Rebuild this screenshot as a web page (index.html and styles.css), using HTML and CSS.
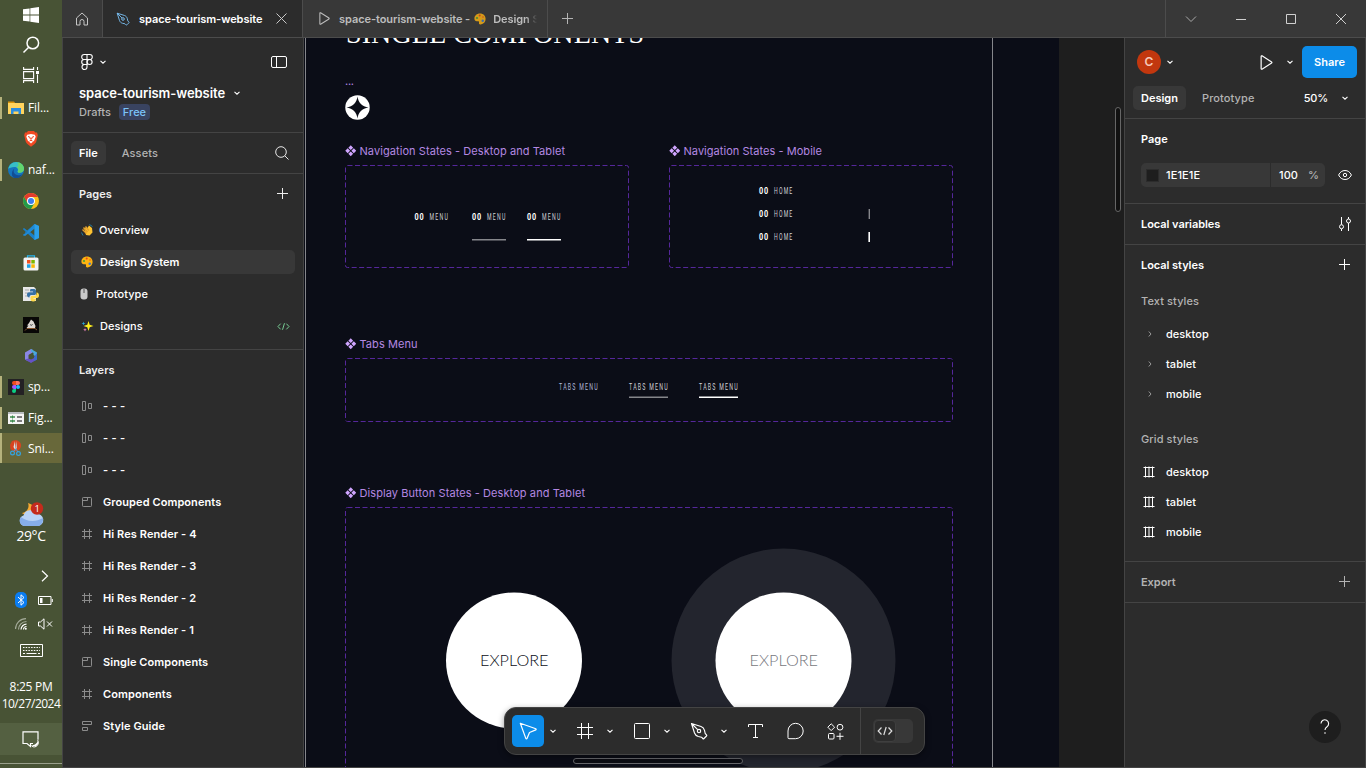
FILE: index.html
```html
<!DOCTYPE html>
<html lang="en">
<head>
<meta charset="utf-8">
<title>space-tourism-website</title>
<link rel="stylesheet" href="styles.css">
</head>
<body>
<svg class="sprite" aria-hidden="true">
  <symbol id="chev" viewBox="0 0 8 8"><path d="M1.5 2.8 4 5.2 6.5 2.8" fill="none" stroke="currentColor" stroke-width="1.1"/></symbol>
  <symbol id="caret" viewBox="0 0 8 8"><path d="M2.8 1.5 5 4 2.8 6.5" fill="none" stroke="currentColor"/></symbol>
  <symbol id="plus" viewBox="0 0 12 12"><path d="M6 .5v11M.5 6h11" fill="none" stroke="currentColor" transform="translate(-.5 -.5)"/></symbol>
  <symbol id="hash" viewBox="0 0 16 16"><path d="M4.5 0v16M11.5 0v16M0 4.5h16M0 11.5h16" fill="none" stroke="currentColor"/></symbol>
  <symbol id="auto-h" viewBox="0 0 12 12"><path d="M1.5 1.5h3v9h-3zM7.500 3.5h3v5h-3z" fill="none" stroke="currentColor"/></symbol>
  <symbol id="auto-v" viewBox="0 0 12 12"><path d="M1.500 1.500h9v3h-9zM1.500 7.500h5v3h-5z" fill="none" stroke="currentColor"/></symbol>
  <symbol id="section" viewBox="0 0 12 12"><rect x="1.500" y="1.500" width="9" height="9" rx=".8" fill="none" stroke="currentColor"/><path d="M2 4.500h4.500V2" fill="none" stroke="currentColor"/></symbol>
  <symbol id="frame" viewBox="0 0 12 12"><path d="M3.500 1v10M8.500 1v10M1 3.500h10M1 8.500h10" fill="none" stroke="currentColor"/></symbol>
  <symbol id="grid" viewBox="0 0 12 12"><path d="M2.500.500v11M6 .500v11M9.500.500v11M.500 1.500h11M.500 10.500h11" fill="none" stroke="currentColor"/></symbol>
  <symbol id="code" viewBox="0 0 16 10"><path d="M4.500 1.500 1.200 5l3.300 3.500M11.500 1.500 14.800 5l-3.300 3.500M9.200 1 6.800 9" fill="none" stroke="currentColor" stroke-width="1.200"/></symbol>
  <symbol id="play" viewBox="0 0 14 14"><path d="M2 1.300v11.400c0 .5.400.700.800.500L11.800 7.500a.6.600 0 0 0 0-1L2.800.800C2.400.600 2 .800 2 1.300z" fill="none" stroke="currentColor" stroke-width="1.100"/></symbol>
  <symbol id="pen" viewBox="0 0 18 18"><path d="M1.500 1.500 11 4.500c1.700.600 3 2 3.500 3.800l.700 3.200 1.300 1.300c.4.400.4.800 0 1.200l-2.500 2.500c-.4.400-.8.400-1.200 0l-1.300-1.300-3.200-.700C6.500 14 5.100 12.700 4.500 11zM1.500 1.500l6.200 6.200" fill="none" stroke="currentColor" stroke-width="1.150" stroke-linejoin="round"/><circle cx="9" cy="9" r="1.700" fill="none" stroke="currentColor" stroke-width="1.150"/></symbol>
  <symbol id="palette" viewBox="0 0 12 12"><path d="M6 .6C2.800.600.400 2.800.400 5.600.400 8 2 8.600 3.500 8.200c1.300-.3 1.800.4 1.500 1.500-.3 1.200.5 1.900 1.700 1.700 2.900-.4 4.900-2.700 4.900-5.500C11.600 2.800 9.200.600 6 .600z" fill="#fdb311"/><circle cx="3" cy="5" r="1.100" fill="#4b9e35"/><circle cx="5.700" cy="2.500" r="1" fill="#e8471c"/><circle cx="9" cy="4" r="1" fill="#f2791c"/><circle cx="8.700" cy="7.800" r="1.200" fill="#3678d3"/></symbol>
  <symbol id="comp" viewBox="0 0 12 12"><path d="M6 .3 8.500 2.800 6 5.300 3.500 2.800zM6 6.700l2.500 2.500L6 11.700 3.500 9.200zM2.800 3.500 5.300 6 2.800 8.500.300 6zM9.200 3.500 11.700 6 9.200 8.500 6.700 6z" fill="#d0a5ff"/></symbol>
</svg>

<div class="desktop">
<nav class="taskbar">
  <div class="tb-sys"><svg width="16" height="16" viewBox="0 0 16 16"><path d="M0 2.300 6.600 1.400v6.200H0zM7.300 1.300 16 0v7.600H7.300zM0 8.400h6.600v6.200L0 13.700zM7.300 8.400H16V16l-8.700-1.300z" fill="#fff"/></svg></div>
  <div class="tb-sys"><svg width="18" height="18" viewBox="0 0 18 18" fill="none" stroke="#fff" stroke-width="1.500"><circle cx="10.800" cy="7" r="5.800"/><path d="M6.700 11.300 1.500 16.500"/></svg></div>
  <div class="tb-sys"><svg width="17" height="16" viewBox="0 0 17 16" fill="none" stroke="#fff" stroke-width="1.100"><path d="M.600 0v2.400h10V0M.600 16v-2.400h10V16M.600 4.600h10v7H.600zM14.500 0v3M14.500 7.500V16"/><path d="M13 4h3v3h-3z" fill="#fff" stroke="none"/></svg></div>
  <div class="tb-apps">
    <div class="tb-app open"><svg width="16" height="16" viewBox="0 0 16 16"><path d="M0 1.500h6l1.500 2H0z" fill="#d9920b"/><path d="M0 3h16v11H0z" fill="#ffd45e"/><path d="M3 8h10v6h-2.500v-2.500h-5V14H3z" fill="#2a8de0"/></svg><span>Fil...</span></div>
    <div class="tb-app"><svg width="14" height="16" viewBox="0 0 14 16"><path d="M4 0h6l1.300 1.400 1.700.2.800 2.600-1.500 6.300c-.5 2-2.300 3.200-5.300 5.200-3-2-4.800-3.200-5.300-5.200L.200 4.200 1 1.600l1.700-.2z" fill="#f04923"/><path d="M3.200 3.800 7 3l3.800.8.900 2-1.500 3.700L7 12.500 3.800 9.500 2.300 5.800z" fill="#fff"/><path d="M4 5.500l2 .8L6.300 8 7 8.500 7.700 8 8 6.300l2-.8M5.500 10 7 9.300l1.500.7" fill="none" stroke="#f04923"/></svg></div>
    <div class="tb-app open"><svg width="16" height="16" viewBox="0 0 16 16"><circle cx="8" cy="8" r="8" fill="#1574bd"/><path d="M.3 7C1 3 4 0 8 0c4.500 0 8 3 8 6.800 0 2.500-2 4-4.200 4-1.800 0-2.600-.8-2-1.800C10.500 7.500 9.500 5 6.500 5 3.500 5 1 6 .3 7z" fill="#38bfc6"/><path d="M9 .2c4 0 7 3 7 6.600 0 2.500-2 4-4.200 4-1.800 0-2.600-.8-2-1.800 1-1.500.2-3-1-3.700C11 4 11 2 9 .200z" fill="#63d46d"/><path d="M6.500 6.500C4.500 9 6 13 10 13.300c2 .1 3.500-.6 4.500-1.300-2 4-6 4.800-9 3.400C3 14 3.500 8 6.500 6.500z" fill="#124e96"/></svg><span>naf...</span></div>
    <div class="tb-app"><svg width="16" height="16" viewBox="0 0 16 16"><circle cx="8" cy="8" r="8" fill="#fbc116"/><path d="M1.100 4A8 8 0 0 1 14.900 4H8L4.500 10z" fill="#e33b2e"/><path d="M1.100 4A8 8 0 0 0 8 16l3.500-6L4.500 10z" fill="#229a4b"/><circle cx="8" cy="8" r="4" fill="#fff"/><circle cx="8" cy="8" r="3" fill="#3b7ded"/></svg></div>
    <div class="tb-app"><svg width="16" height="16" viewBox="0 0 16 16"><path d="M11.500 0 16 2v12l-4.500 2-9-8.800L1 11.800 0 11l3.500-3L0 5l1-.8 3.200 2.300z" fill="#1b80c8"/><path d="M1 4.200 12 12.500V16L0 5z" fill="#1b80c8"/><path d="M11.500 4.500v7L7 8z" fill="#485335"/><path d="M4 8l7.500-8v4.500L2 12l-2-1z" fill="#1f8ad6"/><path d="M11.500 0 16 2v12l-4.500 2z" fill="#2ba0ea"/></svg></div>
    <div class="tb-app"><svg width="16" height="16" viewBox="0 0 16 16"><path d="M4.500 3.500V.8h7v2.700" fill="none" stroke="#27b5ee" stroke-width="1.200"/><rect x=".5" y="2.500" width="15" height="13" rx="1.500" fill="#f4f4f4"/><path d="M4 5h3.500v3.500H4z" fill="#ef5022"/><path d="M8.300 5h3.500v3.500H8.300z" fill="#7db700"/><path d="M4 9.300h3.500v3.500H4z" fill="#1ba0e8"/><path d="M8.300 9.300h3.500v3.500H8.300z" fill="#fbb805"/></svg></div>
    <div class="tb-app"><svg width="16" height="16" viewBox="0 0 16 16"><path d="M0 1h11l2 2v12H0z" fill="#e8e8e8"/><path d="M2 4h4M2 7h4M2 10h4" stroke="#aaa"/><path d="M8 3h3c1.500 0 2 .7 2 2v2.500c0 1-1 1.500-2 1.500H8.500C7 9 6.500 10 6.500 11.500 4.500 11.500 4 10 4 8.800 4 7 5 6.300 6.500 6.300H10V5.500H7C7 4 7 3 8 3z" fill="#3671a5"/><path d="M13.500 6.500C15.500 6.500 16 8 16 9.500s-.7 2.500-2 2.500h-3.500v.7H13c0 1.700-.6 2.800-2.700 2.800S7.500 14.500 7.500 13v-1.500c0-1 .7-1.700 2-1.700h2.200c1.300 0 1.800-1 1.800-2z" fill="#ffd94c"/></svg></div>
    <div class="tb-app"><svg width="16" height="16" viewBox="0 0 16 16"><path d="M0 0h16v16H0z" fill="#080706"/><path d="M8 2.500 10.500 4.500l2 4.500-.5 2H3.500l2-2.500L4 8.500 6 6z" fill="#ddd8d2"/><path d="M2 13.500 4 11.500h8l2 1.500" fill="none" stroke="#86552f"/><path d="M7 7.500l1.500 1L9.500 7" stroke="#555" fill="none"/></svg></div>
    <div class="tb-app"><svg width="14" height="14" viewBox="0 0 14 14"><path d="M7 0 1 3.500v7L4.500 12.500V6L8.500 3.500 9 1z" fill="#8a86e4"/><path d="M7 0l6 3.500v5L9.500 6V4L7 2.500z" fill="#4aa8dd"/><path d="M1 10.500 7 14l6-3.500V7.500L7 10.500 4.500 9.500z" fill="#6652c4"/><path d="M13 4v6.500l-3 1.500V8z" fill="#3c6bd0"/><path d="M7 5 9 6v2.500L7 9.500 5 8.500V6z" fill="#485335"/></svg></div>
    <div class="tb-app open"><svg width="16" height="16" viewBox="0 0 16 16"><path d="M0 0h16v16H0z" fill="#232124"/><path d="M6 2h2v4H6a2 2 0 0 1 0-4z" fill="#f24e1e"/><path d="M8 2h2a2 2 0 0 1 0 4H8z" fill="#ff7262"/><path d="M6 6h2v4H6a2 2 0 0 1 0-4z" fill="#a259ff"/><circle cx="10" cy="8" r="2" fill="#1abcfe"/><path d="M6 10h2v2a2 2 0 1 1-2-2z" fill="#0acf83"/></svg><span>sp...</span></div>
    <div class="tb-app open"><svg width="16" height="16" viewBox="0 0 16 16"><path d="M0 2h16v12H0z" fill="#f5f5f5"/><path d="M0 2h16v2H0z" fill="#b9bdc0"/><path d="M2 7h5M2 11h5" stroke="#3b8a4b" stroke-width="1.300"/><path d="M9 7h5M9 11h5" stroke="#555" stroke-width="1.300"/><path d="M4.500 5.500v3M4.500 9.500v3" stroke="#3b8a4b" /></svg><span>Fig...</span></div>
    <div class="tb-app active"><svg width="16" height="16" viewBox="0 0 16 16"><path d="M4 1c4-2 9 0 9 4.500 0 4-4 6.500-7 6L2.500 9 2 5z" fill="#d84420"/><path d="M7 1l.5 9.500L5.500 7z" fill="#dfe3e6"/><path d="M8.500 1 7 10 9 8z" fill="#bcc2c6"/><circle cx="4.500" cy="13" r="1.900" fill="none" stroke="#35a3e0" stroke-width="1.200"/><circle cx="10.500" cy="13.500" r="1.900" fill="none" stroke="#35a3e0" stroke-width="1.200"/><path d="M5.500 11.500 8 9l1.800 3" fill="none" stroke="#35a3e0"/></svg><span>Sni...</span></div>
  </div>
  <div class="weather"><svg width="26" height="25" viewBox="0 0 26 25"><path d="M10 1C12 6 8 11 4 11c3 3 10 2 12-3 1-3-2-6-6-7z" fill="#f7a930"/><path d="M6 24a5.500 5.500 0 0 1-.5-10.500 7 7 0 0 1 13-1.500A6 6 0 0 1 20 24z" fill="#b9d3f7"/><path d="M6 24a5.500 5.500 0 0 1-3-9c4 4 14 6 22 1 .6 4-2 8-5 8z" fill="#86aeea"/><circle cx="19" cy="6.500" r="6.200" fill="#c42b1c"/><text x="19" y="10" text-anchor="middle" font-family="Open Sans" font-size="9.500" fill="#fff">1</text></svg><span>29°C</span></div>
  <div class="tray">
    <svg class="more" width="8" height="12" viewBox="0 0 8 12"><path d="M1 .800 6.500 6 1 11.200" fill="none" stroke="#fff" stroke-width="1.200"/></svg>
    <div class="tray-row"><svg width="12" height="16" viewBox="0 0 12 16"><rect width="12" height="16" rx="5" fill="#0a7df2"/><path d="M3 5l6 5.500-3 2.700V2.800l3 2.700L3 11" fill="none" stroke="#fff"/></svg><svg width="15" height="9" viewBox="0 0 15 9"><path d="M.500.500h12.500v8H.500zM14.300 3v3" fill="none" stroke="#fff"/><path d="M2 2h2.500v5H2z" fill="#fff"/></svg></div>
    <div class="tray-row"><svg width="12" height="12" viewBox="0 0 12 12" fill="none" stroke-width="1.200"><path d="M.500 11A10.500 10.500 0 0 1 11 .600M3.500 11.500A8 8 0 0 1 11.500 3.500" stroke="#a3aa98"/><path d="M6 11.500A5.500 5.500 0 0 1 11.500 6.200M8.500 11.500a3 3 0 0 1 3-3" stroke="#fff"/><circle cx="10.800" cy="10.800" r="1" fill="#fff"/></svg><svg width="15" height="12" viewBox="0 0 15 12" fill="none" stroke="#fff"><path d="M.500 4h2L6 .800v10.400L2.500 8h-2zM9 3.500l5 5M14 3.500l-5 5"/></svg></div>
    <svg width="23" height="13" viewBox="0 0 23 13" fill="none" stroke="#fff"><path d="M.500.500h22v12H.500z"/><path d="M3 3.500h17M3 6.500h17" stroke-dasharray="1.500 1.200"/><path d="M3 9.500h2M6.500 9.500h10M18 9.500h2"/></svg>
  </div>
  <div class="clock"><span>8:25 PM</span><span class="date">10/27/2024</span></div>
  <div class="notif"><svg width="18" height="17" viewBox="0 0 18 17"><path d="M11 12.500H8.500v3L5 12.500H1V.800h15v8" fill="none" stroke="#fff" stroke-width="1.200"/><path d="M16 9.500a4 4 0 0 1-5 5.500c-1-.4-1.500-.9-1.500-.9s4.500.8 6.500-4.600z" fill="#fff"/><path d="M15.500 9c1.500 2 1 5-1.500 6.500-2 .9-4 .3-4.500-1" fill="none" stroke="#fff"/></svg></div>
  <div class="peek"></div>
</nav>

<div class="app">
  <header class="titlebar">
    <div class="home"><svg width="14" height="14" viewBox="0 0 14 14"><path d="M1.500 6 7 1l5.500 5v7H9V9.500a2 2 0 0 0-4 0V13H1.500z" fill="none" stroke="#c6c6c6" stroke-linejoin="round"/></svg></div>
    <div class="tab current"><svg class="blue" width="14" height="14"><use href="#pen"/></svg><span class="tab-name">space-tourism-website</span><svg class="x" width="11" height="11" viewBox="0 0 11 11"><path d="M.500.500l10 10M10.500.500l-10 10" stroke="currentColor"/></svg></div>
    <div class="tab other"><svg width="13" height="13"><use href="#play"/></svg><span class="tab-name">space-tourism-website -</span><svg class="emo" width="12" height="12"><use href="#palette"/></svg><span class="tab-name fade">Design S</span></div>
    <div class="newtab"><svg width="11" height="11" viewBox="0 0 11 11"><path d="M5.500 0v11M0 5.500h11" stroke="#b4b4b4"/></svg></div>
    <div class="win">
      <svg width="12" height="12" viewBox="0 0 12 12"><path d="M1 3.500 6 8.500 11 3.500" fill="none" stroke="#aaa"/></svg>
      <svg width="12" height="12" viewBox="0 0 12 12"><path d="M1 6.500h10" stroke="#d0d0d0"/></svg>
      <svg width="12" height="12" viewBox="0 0 12 12"><path d="M1.500 1.500h9v9h-9z" fill="none" stroke="#d0d0d0"/></svg>
      <svg width="12" height="12" viewBox="0 0 12 12"><path d="M1 1l10 10M11 1 1 11" stroke="#d0d0d0"/></svg>
    </div>
  </header>

  <div class="main">
    <aside class="left">
      <div class="file-head">
        <div class="logo-row"><svg width="14" height="18" viewBox="0 0 14 18" fill="none" stroke="#fff" stroke-width="1.100"><path d="M7 1.500H4.200a2.500 2.500 0 0 0 0 5H7zM7 1.500h2.800a2.500 2.500 0 0 1 0 5H7M7 6.500H4.200a2.500 2.500 0 0 0 0 5H7z"/><circle cx="9.600" cy="9" r="2.500"/><path d="M7 11.500H4.200A2.500 2.500 0 1 0 7 14z"/></svg><svg width="8" height="8"><use href="#chev"/></svg><svg class="push" width="16" height="12" viewBox="0 0 16 12" fill="none" stroke="#fff"><rect x=".500" y=".500" width="15" height="11" rx="1.500"/><path d="M5.500.500v11"/></svg></div>
        <div class="name-row"><span>space-tourism-website</span><svg width="8" height="8"><use href="#chev"/></svg></div>
        <div class="drafts"><span>Drafts</span><b>Free</b></div>
      </div>
      <div class="tabs"><span class="pill">File</span><span class="muted">Assets</span><svg class="push" width="14" height="14" viewBox="0 0 14 14" fill="none" stroke="#e8e8e8"><circle cx="6" cy="6" r="5.300"/><path d="M9.800 9.800 13.500 13.500"/></svg></div>
      <div class="pages">
        <div class="sec"><span>Pages</span><svg width="12" height="12"><use href="#plus"/></svg></div>
        <div class="page"><svg width="12" height="12" viewBox="0 0 12 12"><path d="M3.500 5.500 5 3l1.500 1L8 1.500l3 2.500.5 4.500L8.500 11.500 5 11z" fill="#ffc331"/><path d="M1.500 5.500l4 4M2.500 3.500l4 4.500M4.500 2.500l3.500 4" stroke="#e5a02a" stroke-width="1.400"/><path d="M.500 8.500 2 11.500M8.500.500l3 2" stroke="#23789c"/></svg><span>Overview</span></div>
        <div class="page sel"><svg width="12" height="12"><use href="#palette"/></svg><span>Design System</span></div>
        <div class="page mouse"><svg width="8" height="12" viewBox="0 0 8 12"><rect x=".500" y=".500" width="7" height="11" rx="3" fill="#c9c9c9"/><path d="M4 1v4" stroke="#555"/></svg><span>Prototype</span></div>
        <div class="page"><svg width="13" height="12" viewBox="0 0 13 12"><path d="M7.500 1 8.700 4.800 12.500 6 8.700 7.200 7.500 11 6.300 7.200 2.500 6l3.800-1.200z" fill="#fff01e"/><path d="M2.500 1.500 3 3l1.500.5L3 4l-.5 1.500L2 4 .500 3.500 2 3z" fill="#2aa9d8"/><path d="M4 8l.5 1.300 1.300.5-1.300.5L4 11.600l-.5-1.300-1.300-.5 1.300-.5z" fill="#ef86c4"/></svg><span>Designs</span><svg class="dev" width="13" height="9"><use href="#code"/></svg></div>
      </div>
      <div class="layers">
        <div class="sec"><span>Layers</span></div>
        <div class="layer"><svg width="12" height="12"><use href="#auto-h"/></svg><span class="dash">- - -</span></div>
        <div class="layer"><svg width="12" height="12"><use href="#auto-h"/></svg><span class="dash">- - -</span></div>
        <div class="layer"><svg width="12" height="12"><use href="#auto-h"/></svg><span class="dash">- - -</span></div>
        <div class="layer"><svg width="12" height="12"><use href="#section"/></svg><span>Grouped Components</span></div>
        <div class="layer"><svg width="12" height="12"><use href="#frame"/></svg><span>Hi Res Render - 4</span></div>
        <div class="layer"><svg width="12" height="12"><use href="#frame"/></svg><span>Hi Res Render - 3</span></div>
        <div class="layer"><svg width="12" height="12"><use href="#frame"/></svg><span>Hi Res Render - 2</span></div>
        <div class="layer"><svg width="12" height="12"><use href="#frame"/></svg><span>Hi Res Render - 1</span></div>
        <div class="layer"><svg width="12" height="12"><use href="#section"/></svg><span>Single Components</span></div>
        <div class="layer"><svg width="12" height="12"><use href="#frame"/></svg><span>Components</span></div>
        <div class="layer"><svg width="12" height="12"><use href="#auto-v"/></svg><span>Style Guide</span></div>
      </div>
    </aside>

    <section class="canvas">
      <svg class="art" width="820" height="730" viewBox="304 38 820 730">
        <rect x="304" y="38" width="755" height="730" fill="#0b0d17"/>
        <path d="M305.500 38v730M992.500 38v730" stroke="#85868b"/>
        <text class="serif" x="346" y="43" font-size="28" textLength="298" fill="#fff">SINGLE COMPONENTS</text>
        <text class="label" x="345" y="85" font-size="11" textLength="9">...</text>
        <circle cx="357.500" cy="107.500" r="12.200" fill="#fff"/>
        <path d="M357.500 96.500c.9 6.500 4.500 10.100 11 11-6.500.9-10.100 4.500-11 11-.9-6.500-4.500-10.100-11-11 6.500-.9 10.100-4.500 11-11z" fill="#0b0d17"/>

        <use href="#comp" x="345" y="145" width="11.500" height="11.500"/>
        <text class="label" x="359.500" y="155" textLength="205.500">Navigation States - Desktop and Tablet</text>
        <use href="#comp" x="669" y="145" width="11.500" height="11.500"/>
        <text class="label" x="683.500" y="155" textLength="138.500">Navigation States - Mobile</text>
        <use href="#comp" x="345" y="338" width="11.500" height="11.500"/>
        <text class="label" x="359.500" y="348" textLength="58">Tabs Menu</text>
        <use href="#comp" x="345" y="487" width="11.500" height="11.500"/>
        <text class="label" x="359.500" y="497" textLength="225.500">Display Button States - Desktop and Tablet</text>

        <g fill="none" stroke="#55279a" stroke-dasharray="5 2.500">
          <rect x="345.500" y="165.500" width="283" height="102" rx="2"/>
          <rect x="669.500" y="165.500" width="283" height="102" rx="2"/>
          <rect x="345.500" y="358.500" width="607" height="63" rx="2"/>
          <rect x="345.500" y="507.500" width="607" height="300" rx="2"/>
        </g>

        <g class="cond">
          <text class="num" x="414.500" y="220" textLength="10" lengthAdjust="spacingAndGlyphs">00</text><text x="429.500" y="220" textLength="19.500" lengthAdjust="spacingAndGlyphs">MENU</text>
          <text class="num" x="472" y="220" textLength="10" lengthAdjust="spacingAndGlyphs">00</text><text x="487" y="220" textLength="19.500" lengthAdjust="spacingAndGlyphs">MENU</text>
          <text class="num" x="527" y="220" textLength="10" lengthAdjust="spacingAndGlyphs">00</text><text x="542" y="220" textLength="19.500" lengthAdjust="spacingAndGlyphs">MENU</text>
          <text class="num" x="759" y="194" textLength="10" lengthAdjust="spacingAndGlyphs">00</text><text x="774" y="194" textLength="19.500" lengthAdjust="spacingAndGlyphs">HOME</text>
          <text class="num" x="759" y="217" textLength="10" lengthAdjust="spacingAndGlyphs">00</text><text x="774" y="217" textLength="19.500" lengthAdjust="spacingAndGlyphs">HOME</text>
          <text class="num" x="759" y="240" textLength="10" lengthAdjust="spacingAndGlyphs">00</text><text x="774" y="240" textLength="19.500" lengthAdjust="spacingAndGlyphs">HOME</text>
          <text class="tint" x="559" y="390" textLength="40" lengthAdjust="spacingAndGlyphs">TABS MENU</text>
          <text x="629" y="390" textLength="40" lengthAdjust="spacingAndGlyphs">TABS MENU</text>
          <text x="699" y="390" textLength="40" lengthAdjust="spacingAndGlyphs">TABS MENU</text>
        </g>
        <path d="M472 239.700h34M629 397.200h39" stroke="#85868b" stroke-width="1.500"/>
        <path d="M527 239.700h34M699 397.200h39" stroke="#fff" stroke-width="1.500"/>
        <path d="M869.300 209v10" stroke="#85868b" stroke-width="1.400"/>
        <path d="M869.200 232v10" stroke="#fff" stroke-width="1.600"/>

        <circle cx="783.500" cy="660.500" r="112" fill="#23252e"/>
        <circle cx="514" cy="660.500" r="68" fill="#fff"/>
        <circle cx="783.500" cy="660.500" r="68" fill="#fff"/>
        <text class="display" x="480" y="665.500" textLength="68.500" lengthAdjust="spacingAndGlyphs" fill="#0b0d17">EXPLORE</text>
        <text class="display" x="749.500" y="665.500" textLength="68.500" lengthAdjust="spacingAndGlyphs" fill="#777880">EXPLORE</text>
      </svg>
      <div class="vscroll"></div>
      <div class="hscroll"></div>
      <div class="toolbar">
        <div class="tool on"><svg width="20" height="20" viewBox="0 0 20 20"><path d="M2.300 2.300 17.800 7.800c.5.200.5.900 0 1.100L11.500 11.500 9 17.600c-.2.500-.9.500-1.100 0z" fill="none" stroke="#fff" stroke-width="1.200" stroke-linejoin="round"/></svg></div><svg class="c" width="8" height="8"><use href="#chev"/></svg>
        <div class="tool"><svg width="16" height="16"><use href="#hash"/></svg></div><svg class="c" width="8" height="8"><use href="#chev"/></svg>
        <div class="tool"><svg width="16" height="16" viewBox="0 0 16 16"><rect x=".500" y=".500" width="15" height="15" rx="1" fill="none" stroke="#fff"/></svg></div><svg class="c" width="8" height="8"><use href="#chev"/></svg>
        <div class="tool"><svg width="18" height="18"><use href="#pen"/></svg></div><svg class="c" width="8" height="8"><use href="#chev"/></svg>
        <div class="tool wide"><svg width="16" height="16" viewBox="0 0 16 16"><path d="M.500 4V1.500h14V4M7.500 1.500v13M5 14.500h5" fill="none" stroke="#fff"/></svg></div>
        <div class="tool wide"><svg width="18" height="18" viewBox="0 0 18 18"><path d="M8.500 1.300a7.700 7.700 0 1 1 0 15.400H2a1 1 0 0 1-1-1V9A7.600 7.600 0 0 1 8.500 1.300z" fill="none" stroke="#fff"/></svg></div>
        <div class="tool wide"><svg width="18" height="17" viewBox="0 0 18 17" fill="none" stroke="#fff"><path d="M4.200.800 7.600 4.200 4.200 7.600.800 4.200z" stroke-linejoin="round"/><circle cx="13" cy="4.200" r="2.900"/><rect x="1.500" y="10.500" width="5.500" height="5.500" rx="1"/><path d="M13 9.800v7M9.500 13.300h7"/></svg></div>
        <div class="devtog"><div class="switch"><div class="knob"><svg width="16" height="10"><use href="#code"/></svg></div></div></div>
      </div>
    </section>

    <aside class="right">
      <div class="r-head">
        <div class="r-user"><span class="avatar">C</span><svg width="8" height="8"><use href="#chev"/></svg><svg class="r-play" width="15" height="15"><use href="#play"/></svg><svg class="r-c" width="8" height="8"><use href="#chev"/></svg><span class="share">Share</span></div>
        <div class="r-tabs"><span class="pill">Design</span><span class="muted">Prototype</span><span class="zoom">50%</span><svg width="8" height="8"><use href="#chev"/></svg></div>
      </div>
      <div class="r-page">
        <div class="h">Page</div>
        <div class="fill"><div class="field"><i></i><span class="hex">1E1E1E</span><span class="pct">100</span><em>%</em></div><svg width="14" height="12" viewBox="0 0 14 12" fill="none" stroke="#fff"><path d="M.600 6C2 3 4.200 1.500 7 1.500S12 3 13.400 6C12 9 9.800 10.500 7 10.500S2 9 .600 6z"/><circle cx="7" cy="6" r="1.700"/></svg></div>
      </div>
      <div class="r-row"><span>Local variables</span><svg width="14" height="16" viewBox="0 0 14 16" fill="none" stroke="#fff"><path d="M3.500 1v7.500M3.500 13v2M10.500 1v2M10.500 7v8"/><circle cx="3.500" cy="10.700" r="2"/><circle cx="10.500" cy="5" r="2"/></svg></div>
      <div class="r-styles">
        <div class="r-row nb"><span>Local styles</span><svg width="12" height="12"><use href="#plus"/></svg></div>
        <div class="group">Text styles</div>
        <div class="st"><svg class="g" width="8" height="8"><use href="#caret"/></svg><span>desktop</span></div>
        <div class="st"><svg class="g" width="8" height="8"><use href="#caret"/></svg><span>tablet</span></div>
        <div class="st"><svg class="g" width="8" height="8"><use href="#caret"/></svg><span>mobile</span></div>
        <div class="group two">Grid styles</div>
        <div class="st"><svg width="12" height="12"><use href="#grid"/></svg><span>desktop</span></div>
        <div class="st"><svg width="12" height="12"><use href="#grid"/></svg><span>tablet</span></div>
        <div class="st"><svg width="12" height="12"><use href="#grid"/></svg><span>mobile</span></div>
      </div>
      <div class="r-row dim"><span>Export</span><svg width="12" height="12"><use href="#plus"/></svg></div>
      <div class="help"><svg width="10" height="16" viewBox="0 0 10 16"><path d="M1 4.500a3.800 3.800 0 1 1 6 3.200C5.500 8.700 5 9.300 5 11" fill="none" stroke="#fff" stroke-width="1.100"/><circle cx="5" cy="14" r=".8" fill="#fff"/></svg></div>
    </aside>
  </div>
</div>
</div>
</body>
</html>
```
FILE: styles.css
```css
* { box-sizing: border-box; }
body { margin: 0; background: #2c2c2c; color: #fff; font-family: Inter, sans-serif; font-size: 11px; overflow: hidden; }
svg { display: block; flex: none; }
span { white-space: pre; }
.sprite { position: absolute; width: 0; height: 0; }
.desktop { display: flex; width: 1366px; height: 768px; }

/* Windows taskbar */
.taskbar { width: 62px; flex: none; display: flex; flex-direction: column; background: #485335; font-family: "Open Sans", sans-serif; }
.tb-sys { height: 30px; display: flex; align-items: center; justify-content: center; }
.tb-apps { padding-top: 2px; }
.tb-app { height: 31px; display: flex; align-items: center; justify-content: center; }
.tb-app.open, .tb-app.active { justify-content: flex-start; font-size: 12px; letter-spacing: -.1px; }
.tb-app.open::before, .tb-app.active::before { content: ""; width: 2px; height: 22px; background: #b5b27c; margin-right: 6px; }
.tb-app.open span, .tb-app.active span { margin-left: 4px; }
.tb-app.active { background: #68683a; height: 30px; }
.tb-app.active::before { height: 30px; }
.weather { height: 46px; margin-top: 39px; display: flex; flex-direction: column; align-items: center; font-size: 14px; line-height: 17px; letter-spacing: -.4px; }
.tray { display: flex; flex-direction: column; align-items: center; padding-top: 22px; }
.more { margin: 0 0 6px 28px; }
.tray-row { width: 38px; height: 24px; display: flex; align-items: center; justify-content: space-between; margin-left: 6px; }
.tray-row + svg { margin-top: 8px; }
.clock { display: flex; flex-direction: column; align-items: center; margin-top: 21px; font-size: 12px; line-height: 17px; letter-spacing: -.3px; }
.date { letter-spacing: -.5px; }
.notif { height: 32px; margin-top: auto; margin-bottom: 8px; display: flex; align-items: center; justify-content: center; background: #546041; }
.peek { height: 5px; border-top: 1px solid #9aa08c; }

/* Title bar */
.app { flex: 1; display: flex; flex-direction: column; min-width: 0; }
.titlebar { height: 38px; display: flex; background: #383838; border-bottom: 1px solid #4c4c4c; }
.home { width: 41px; display: flex; align-items: center; justify-content: center; border-right: 1px solid #4c4c4c; padding-right: 1px; }
.tab { display: flex; align-items: center; border-right: 1px solid #4c4c4c; font-weight: 600; }
.tab.current { width: 200px; background: #2c2c2c; padding: 0 15px 0 13px; }
.blue { color: #7cc4f8; }
.tab-name { margin-left: 9px; letter-spacing: -.06px; }
.x { margin-left: auto; color: #c8c8c8; }
.tab.other { width: 245px; padding-left: 15px; color: #bdbdbd; overflow: hidden; }
.other .tab-name { margin-left: 8px; }
.emo { margin-left: 4px; opacity: .8; }
.other .fade { margin-left: 7px; width: 44px; overflow: hidden; -webkit-mask-image: linear-gradient(90deg, #000 75%, transparent 100%); mask-image: linear-gradient(90deg, #000 75%, transparent 100%); }
.newtab { display: flex; align-items: center; padding-left: 14px; }
.win { margin-left: auto; border-left: 1px solid #4c4c4c; width: 201px; display: flex; align-items: center; justify-content: space-between; padding: 0 19px; }

.main { flex: 1; display: flex; min-height: 0; }

/* File panel */
.left { width: 242px; flex: none; background: #2c2c2c; border: 1px solid #444; border-top: 0; }
.push { margin-left: auto; }
.file-head { height: 95px; border-bottom: 1px solid #444; padding: 14px 16px 0 17px; }
.logo-row { display: flex; align-items: center; gap: 5px; height: 20px; }
.name-row { display: flex; align-items: center; gap: 8px; height: 18px; margin: 12px 0 0 -1px; font-size: 13px; font-weight: 600; letter-spacing: -.06px; }
.drafts { display: flex; align-items: center; gap: 8px; height: 20px; margin-left: -1px; color: #b3b3b3; font-weight: 500; letter-spacing: .02px; }
.drafts b { font-weight: 500; color: #7cc4f8; background: #394360; border-radius: 4px; height: 16px; line-height: 16px; padding: 0 4px; }
.tabs { height: 41px; border-bottom: 1px solid #444; display: flex; align-items: center; padding: 0 14px 0 8px; font-weight: 500; }
.pill { background: #383838; border-radius: 5px; height: 24px; line-height: 24px; padding: 0 8px; font-weight: 600; }
.muted { color: #b3b3b3; margin-left: 16px; letter-spacing: .1px; font-weight: 500; }
.sec { height: 40px; display: flex; align-items: center; justify-content: space-between; padding: 0 14px 0 16px; font-weight: 600; color: #eee; }
.pages { height: 176px; border-bottom: 1px solid #444; }
.page { height: 24px; margin: 4px 8px 8px; padding: 0 5px 0 10px; border-radius: 5px; display: flex; align-items: center; gap: 6px; font-weight: 500; letter-spacing: .04px; }
.page.mouse { padding-left: 9px; gap: 8px; }
.page.sel { background: #383838; font-weight: 600; gap: 7px; letter-spacing: -.02px; }
.dev { margin-left: auto; color: #79d297; }
.layer { height: 32px; padding-left: 18px; display: flex; align-items: center; gap: 10px; font-weight: 600; letter-spacing: .08px; }
.layer svg { color: #8c8c8c; }
.dash { letter-spacing: .3px; }

/* Canvas */
.canvas { position: relative; flex: 1; background: #1e1e1e; overflow: hidden; border-bottom: 1px solid #444; }
.serif { font-family: "Liberation Serif", serif; }
.display { font-family: Lato, sans-serif; font-weight: 300; font-size: 16px; }
.label { font-family: Inter, sans-serif; font-size: 11px; fill: #b488e2; }
.cond { font-family: Roboto, sans-serif; font-size: 8.5px; fill: #d4d4d8; letter-spacing: 2px; }
.num { font-weight: 700; fill: #fff; letter-spacing: 1px; }
.tint { fill: #b4bbdb; }
.vscroll { position: absolute; right: 3px; top: 69px; width: 6px; height: 105px; border: 1px solid #666; border-radius: 3px; background: #111; }
.hscroll { position: absolute; left: 269px; bottom: 3px; width: 170px; height: 6px; border: 1px solid #66676b; border-radius: 3px; background: #0b0c12; }
.toolbar { position: absolute; left: 200px; top: 669px; width: 421px; height: 48px; background: #2c2c2c; border: 1px solid #444; border-radius: 12px; display: flex; align-items: center; padding-left: 7px; box-shadow: 0 2px 6px rgba(0,0,0,.4); }
.tool { width: 32px; height: 32px; border-radius: 5px; display: flex; align-items: center; justify-content: center; }
.tool.on { background: #0c8ce9; }
.c { margin: 0 12.500px 0 4.500px; }
.tool.wide { margin-right: 8px; }
.devtog { margin-left: auto; width: 64px; height: 46px; border-left: 1px solid #444; display: flex; align-items: center; padding-left: 12px; }
.switch { width: 40px; height: 24px; border-radius: 5px; background: #383838; padding: 1px; }
.knob { width: 22px; height: 22px; border-radius: 4px; background: #2c2c2c; border: 1px solid #3f3f3f; display: flex; align-items: center; justify-content: center; color: #ddd; }

/* Design panel */
.right { position: relative; width: 242px; flex: none; background: #2c2c2c; border: 1px solid #444; border-top: 0; }
.r-head { height: 81px; border-bottom: 1px solid #444; }
.r-user { height: 48px; display: flex; align-items: center; padding: 0 8px 0 12px; gap: 5px; }
.avatar { width: 24px; height: 24px; border-radius: 50%; background: #c2370e; color: #f6c8b8; text-align: center; line-height: 24px; font-weight: 600; font-size: 12px; }
.r-play { margin-left: auto; }
.r-c { margin-left: 7px; }
.share { width: 55px; height: 32px; line-height: 32px; text-align: center; background: #0c8ce9; border-radius: 5px; font-weight: 600; margin-left: 3px; }
.r-tabs { height: 24px; display: flex; align-items: center; padding: 0 16px 0 8px; }
.zoom { margin-left: auto; margin-right: 13px; font-weight: 500; letter-spacing: -.2px; }
.r-page { height: 85px; border-bottom: 1px solid #444; padding: 0 13px 0 16px; }
.h { height: 44px; line-height: 41px; font-weight: 600; }
.fill { display: flex; align-items: center; justify-content: space-between; }
.field { width: 184px; height: 24px; border-radius: 5px; background: #383838; display: flex; align-items: center; font-weight: 500; }
.field i { width: 13px; height: 13px; margin-left: 5px; background: #1e1e1e; border: 1px solid #2c2c2c; }
.hex { width: 104px; margin-left: 7px; }
.field .hex, .field .pct { letter-spacing: .1px; }
.pct { border-left: 1px solid #2c2c2c; line-height: 24px; padding-left: 8px; width: 38px; }
.field em { font-style: normal; color: #b3b3b3; }
.r-row { height: 41px; border-bottom: 1px solid #444; display: flex; align-items: center; justify-content: space-between; padding: 0 13px 0 16px; font-weight: 600; letter-spacing: -.05px; }
.nb { height: 40px; border: 0; padding-right: 14px; }
.r-styles { height: 317px; border-bottom: 1px solid #444; }
.group { height: 34px; line-height: 32px; padding-left: 16px; color: #b3b3b3; font-weight: 500; letter-spacing: .1px; }
.two { margin-top: 14px; }
.st { height: 30px; display: flex; align-items: center; gap: 11px; padding-left: 18px; font-weight: 500; letter-spacing: .05px; }
.g { color: #999; margin: 0 1px 0 3px; }
.dim { color: #b3b3b3; padding-right: 14px; }
.help { position: absolute; right: 24px; bottom: 24px; width: 32px; height: 32px; border-radius: 50%; background: #1e1e1e; display: flex; align-items: center; justify-content: center; }
```
